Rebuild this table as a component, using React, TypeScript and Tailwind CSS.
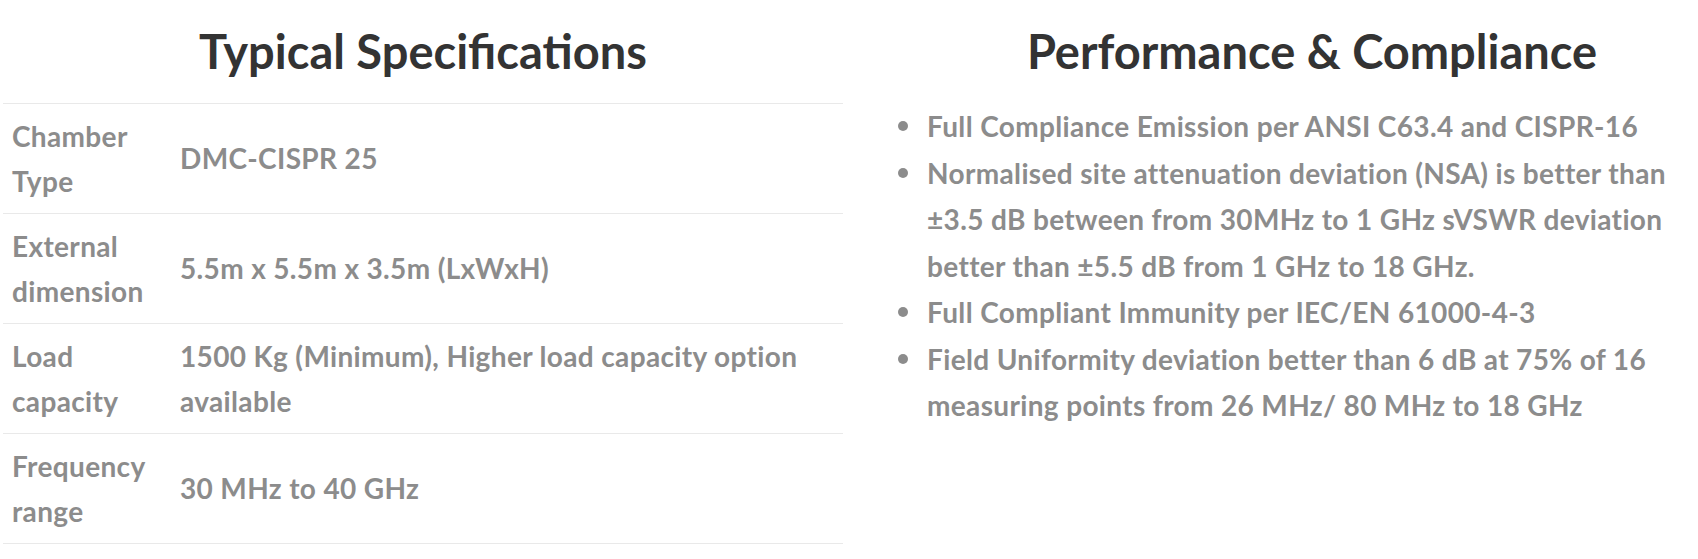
const specs = [
    { label: 'Chamber Type', value: 'DMC-CISPR 25' },
    { label: 'External dimension', value: '5.5m x 5.5m x 3.5m (LxWxH)' },
    { label: 'Load capacity', value: '1500 Kg (Minimum), Higher load capacity option available' },
    { label: 'Frequency range', value: '30 MHz to 40 GHz' },
];

const compliance = [
    'Full Compliance Emission per ANSI C63.4 and CISPR-16',
    'Normalised site attenuation deviation (NSA) is better than ±3.5 dB between from 30MHz to 1 GHz sVSWR deviation better than ±5.5 dB from 1 GHz to 18 GHz.',
    'Full Compliant Immunity per IEC/EN 61000-4-3',
    'Field Uniformity deviation better than 6 dB at 75% of 16 measuring points from 26 MHz/ 80 MHz to 18 GHz',
];

const App = () => {
    return (
        <div className="w-full min-h-[559px] overflow-hidden bg-white font-['Lato','Liberation_Sans',sans-serif]">
            <div className="grid grid-cols-[840px_890px] gap-[24px] pl-[3px]">
                {/* specs table */}
                <section>
                    <h2 className="pt-[23px] mb-[24px] text-center text-[47px] leading-[56px] font-bold text-[#333333]">
                        Typical Specifications
                    </h2>
                    <div className="border-t border-[#e9e9e9]">
                        {specs.map((row) => (
                            <div key={row.label} className="grid grid-cols-[168px_1fr] border-b border-[#e9e9e9]">
                                <div className="px-[9px] py-[9.5px] text-[28px] leading-[45px] tracking-[0.35px] font-bold text-[#8c8c8c]">
                                    {row.label}
                                </div>
                                <div className="flex items-center px-[9px] py-[9.5px] text-[28px] leading-[45px] tracking-[0.35px] font-bold text-[#8c8c8c]">
                                    {row.value}
                                </div>
                            </div>
                        ))}
                    </div>
                </section>

                {/* compliance list */}
                <section>
                    <h2 className="pt-[23px] mb-[24px] text-center text-[47px] leading-[56px] font-bold text-[#333333]">
                        Performance &amp; Compliance
                    </h2>
                    <ul>
                        {compliance.map((item) => (
                            <li key={item} className="flex text-[28px] leading-[46.5px] tracking-[0.35px] font-bold text-[#8c8c8c]">
                                <span className="flex-none w-[60px] h-[46.5px] flex items-center">
                                    <span className="ml-[31px] w-[10px] h-[10px] rounded-full bg-[#8c8c8c]" />
                                </span>
                                <span className="pr-[55px]">{item}</span>
                            </li>
                        ))}
                    </ul>
                </section>
            </div>
        </div>
    );
};

export default App;
